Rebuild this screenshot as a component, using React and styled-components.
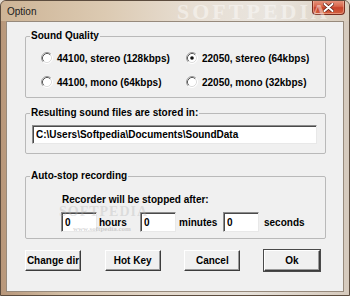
import React from 'react';
import styled, { createGlobalStyle } from 'styled-components';

const GlobalStyle = createGlobalStyle`
  html, body {
    margin: 0;
    padding: 0;
    background: #e4dbd0;
  }
  * {
    box-sizing: border-box;
  }
`;

const Window = styled.div`
  position: relative;
  width: 350px;
  height: 296px;
  display: flex;
  flex-direction: column;
  border: 1px solid #5c4c3e;
  border-radius: 6px 6px 0 0;
  padding: 0 5px 3px 5px;
  background: linear-gradient(90deg, #b8977a 0%, #d3bfa6 18%, #e3d8cb 45%, #e6e1da 70%, #d6cabd 100%);
  overflow: hidden;
`;

const TitleBar = styled.div`
  height: 20px;
  display: flex;
  align-items: center;
  flex-shrink: 0;
  margin: 0 -5px;
  padding: 0 4px 0 6px;
  background: linear-gradient(90deg, #cdb496 0%, #dccab2 30%, #e7ded3 55%, #e9e5df 78%, #dacdbd 100%);
`;

const Title = styled.span`
  font-family: "Liberation Sans", Arial, sans-serif;
  font-size: 10px;
  color: #1a1a1a;
  margin-top: 1px;
`;

const Watermark = styled.span`
  position: absolute;
  left: ${p => p.$left}px;
  top: ${p => p.$top}px;
  font-family: "Liberation Serif", "Times New Roman", serif;
  font-size: ${p => p.$size}px;
  font-weight: bold;
  letter-spacing: ${p => p.$spacing || 0}px;
  color: ${p => p.$color};
  pointer-events: none;
  white-space: nowrap;
`;

const CloseButton = styled.div`
  margin-left: auto;
  align-self: flex-start;
  margin-top: -1px;
  width: 33px;
  height: 15px;
  display: flex;
  align-items: center;
  justify-content: center;
  border: 1px solid #7a2e20;
  border-top: none;
  border-radius: 0 0 4px 4px;
  background: linear-gradient(180deg, #e89a84 0%, #d8674c 45%, #c7432b 55%, #d2603f 100%);
  box-shadow: inset 0 0 0 1px rgba(255, 210, 190, 0.45);
`;

const Client = styled.div`
  flex: 1;
  display: flex;
  flex-direction: column;
  background: #f0f0f0;
  border: 1px solid #978a7c;
  padding: 8px 17px 0 18px;
`;

const Group = styled.fieldset`
  margin: ${p => p.$top || 0}px 0 0 0;
  padding: 0;
  border: 1px solid #b9b9b9;
  border-radius: 2px;
  min-width: 0;
`;

const Legend = styled.legend`
  margin-left: 4px;
  padding: 0 1px;
  font-family: "Liberation Sans", Arial, sans-serif;
  font-size: 10px;
  line-height: 12px;
  font-weight: bold;
  color: #000;
`;

const RadioGrid = styled.div`
  display: grid;
  grid-template-columns: 145px 1fr;
  row-gap: 10px;
  padding: 9px 0 8px 15px;
`;

const RadioItem = styled.label`
  display: flex;
  align-items: center;
  height: 14px;
  font-family: "Liberation Sans", Arial, sans-serif;
  font-size: 10px;
  font-weight: bold;
  color: #000;
  white-space: nowrap;
  svg {
    flex-shrink: 0;
    margin-right: 4px;
  }
`;

const PathBody = styled.div`
  padding: 6px 7px 9px 6px;
`;

const TextBox = styled.input`
  display: block;
  width: ${p => p.$width}px;
  height: ${p => p.$height}px;
  margin: 0;
  padding: 0 3px;
  font-family: "Liberation Sans", Arial, sans-serif;
  font-size: 10px;
  font-weight: bold;
  color: #000;
  background: #fff;
  border: 1px solid;
  border-color: #8c8c8c #e8e8e8 #e8e8e8 #8c8c8c;
  box-shadow: inset 1px 1px 0 #4a4a4a;
  outline: none;
`;

const StopBody = styled.div`
  padding: 12px 0 6px 36px;
`;

const Caption = styled.div`
  font-family: "Liberation Sans", Arial, sans-serif;
  font-size: 10px;
  line-height: 12px;
  font-weight: bold;
  color: #000;
`;

const TimeRow = styled.div`
  display: flex;
  align-items: center;
  margin: 6px 0 0 -1px;
`;

const TimeCell = styled.div`
  display: flex;
  align-items: center;
  width: ${p => (p.$width ? `${p.$width}px` : 'auto')};
`;

const Unit = styled.span`
  margin-left: ${p => p.$gap}px;
  font-family: "Liberation Sans", Arial, sans-serif;
  font-size: 10px;
  font-weight: bold;
  color: #000;
`;

const ButtonRow = styled.div`
  display: flex;
  justify-content: space-between;
  margin: 11px 6px 0 0;
`;

const Button = styled.button`
  width: 56px;
  height: 21px;
  margin: 0;
  padding: 0;
  font-family: "Liberation Sans", Arial, sans-serif;
  font-size: 10px;
  font-weight: bold;
  color: #000;
  background: #f0f0f0;
  border: 1px solid;
  border-color: #ffffff #3c3c3c #3c3c3c #ffffff;
  box-shadow: inset -1px -1px 0 #9a9a9a${p => (p.$default ? ', 0 0 0 1px #4a4a4a' : '')};
  white-space: nowrap;
`;

const Radio = ({ checked }) => (
  <svg width="12" height="12" viewBox="0 0 12 12">
    <circle cx="6" cy="6" r="5" fill="#fff" />
    <path d="M2.11 9.89 A5.5 5.5 0 0 1 9.89 2.11" fill="none" stroke="#9a9a9a" strokeWidth="1" />
    <path d="M9.89 2.11 A5.5 5.5 0 0 1 2.11 9.89" fill="none" stroke="#ffffff" strokeWidth="1" />
    <path d="M2.82 9.18 A4.5 4.5 0 0 1 9.18 2.82" fill="none" stroke="#5a5a5a" strokeWidth="1" />
    <path d="M9.18 2.82 A4.5 4.5 0 0 1 2.82 9.18" fill="none" stroke="#dcdcdc" strokeWidth="1" />
    {checked && <circle cx="6" cy="6" r="1.8" fill="#111" />}
  </svg>
);

const CloseGlyph = () => (
  <svg width="11" height="9" viewBox="0 0 11 9">
    <path d="M1.5 1 L9.5 8 M9.5 1 L1.5 8" stroke="#5a1d12" strokeWidth="3.4" strokeLinecap="round" />
    <path d="M1.5 1 L9.5 8 M9.5 1 L1.5 8" stroke="#ffffff" strokeWidth="2" strokeLinecap="round" />
  </svg>
);

const qualities = [
  { label: '44100, stereo (128kbps)', checked: false },
  { label: '22050, stereo (64kbps)', checked: true },
  { label: '44100, mono (64kbps)', checked: false },
  { label: '22050, mono (32kbps)', checked: false },
];

const App = () => (
  <>
    <GlobalStyle />
    <Window>
      <TitleBar>
        <Title>Option</Title>
        <CloseButton>
          <CloseGlyph />
        </CloseButton>
      </TitleBar>
      <Watermark $left={176} $top={-2} $size={22} $spacing={3} $color="rgba(255,255,255,0.45)">
        SOFTPEDIA
      </Watermark>
      <Client>
        <Group>
          <Legend>Sound Quality</Legend>
          <RadioGrid>
            {qualities.map(q => (
              <RadioItem key={q.label}>
                <Radio checked={q.checked} />
                {q.label}
              </RadioItem>
            ))}
          </RadioGrid>
        </Group>

        <Group $top={9}>
          <Legend>Resulting sound files are stored in:</Legend>
          <PathBody>
            <TextBox $width={285} $height={19} readOnly value="C:\Users\Softpedia\Documents\SoundData" />
          </PathBody>
        </Group>

        <Group $top={16}>
          <Legend>Auto-stop recording</Legend>
          <StopBody>
            <Caption>Recorder will be stopped after:</Caption>
            <TimeRow>
              <TimeCell $width={79}>
                <TextBox $width={36} $height={20} readOnly value="0" />
                <Unit $gap={2}>hours</Unit>
              </TimeCell>
              <TimeCell $width={83}>
                <TextBox $width={36} $height={20} readOnly value="0" />
                <Unit $gap={3}>minutes</Unit>
              </TimeCell>
              <TimeCell>
                <TextBox $width={36} $height={20} readOnly value="0" />
                <Unit $gap={5}>seconds</Unit>
              </TimeCell>
            </TimeRow>
          </StopBody>
        </Group>

        <ButtonRow>
          <Button>Change dir</Button>
          <Button>Hot Key</Button>
          <Button>Cancel</Button>
          <Button $default>Ok</Button>
        </ButtonRow>
      </Client>
      <Watermark $left={58} $top={203} $size={14} $spacing={1} $color="rgba(180,180,180,0.35)">
        SOFTPEDIA
      </Watermark>
      <Watermark $left={72} $top={224} $size={7} $color="rgba(170,170,170,0.5)">
        www.softpedia.com
      </Watermark>
    </Window>
  </>
);

export default App;
